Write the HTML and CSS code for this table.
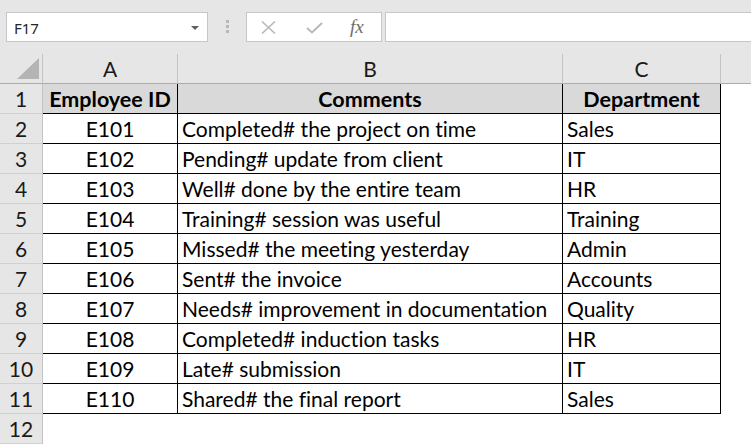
FILE: index.html
```html
<!DOCTYPE html>
<html>
<head>
<meta charset="utf-8">
<link rel="stylesheet" href="styles.css">
</head>
<body>
<div class="app">
  <div class="formula-bar">
    <div class="namebox">
      <span class="nb-text">F17</span>
      <svg class="nb-arrow" width="8" height="4" viewBox="0 0 8 4"><path d="M0 0H8L4 4Z" fill="#5f5f5f"/></svg>
    </div>
    <div class="grip"><i></i><i></i><i></i></div>
    <div class="fbuttons">
      <svg class="ic-x" width="15" height="13" viewBox="0 0 15 13"><path d="M1 0.5L14 12.5M14 0.5L1 12.5" stroke="#b9b9b9" stroke-width="1.6" fill="none"/></svg>
      <svg class="ic-check" width="17" height="12" viewBox="0 0 17 12"><path d="M1 6L6 10.5L16 1" stroke="#b9b9b9" stroke-width="2" fill="none"/></svg>
      <span class="fx">fx</span>
    </div>
    <div class="finput"></div>
  </div>
  <div class="sheet">
    <div class="corner"><span class="tri"></span></div>
    <div class="ch">A</div><div class="ch">B</div><div class="ch">C</div><div class="ch ch-end"></div>

    <div class="rh">1</div><div class="c th">Employee ID</div><div class="c th">Comments</div><div class="c th">Department</div><div class="e"></div>
    <div class="rh">2</div><div class="c ctr">E101</div><div class="c">Completed# the project on time</div><div class="c">Sales</div><div class="e"></div>
    <div class="rh">3</div><div class="c ctr">E102</div><div class="c">Pending# update from client</div><div class="c">IT</div><div class="e"></div>
    <div class="rh">4</div><div class="c ctr">E103</div><div class="c">Well# done by the entire team</div><div class="c">HR</div><div class="e"></div>
    <div class="rh">5</div><div class="c ctr">E104</div><div class="c">Training# session was useful</div><div class="c">Training</div><div class="e"></div>
    <div class="rh">6</div><div class="c ctr">E105</div><div class="c">Missed# the meeting yesterday</div><div class="c">Admin</div><div class="e"></div>
    <div class="rh">7</div><div class="c ctr">E106</div><div class="c">Sent# the invoice</div><div class="c">Accounts</div><div class="e"></div>
    <div class="rh">8</div><div class="c ctr">E107</div><div class="c">Needs# improvement in documentation</div><div class="c">Quality</div><div class="e"></div>
    <div class="rh">9</div><div class="c ctr">E108</div><div class="c">Completed# induction tasks</div><div class="c">HR</div><div class="e"></div>
    <div class="rh">10</div><div class="c ctr">E109</div><div class="c">Late# submission</div><div class="c">IT</div><div class="e"></div>
    <div class="rh">11</div><div class="c ctr">E110</div><div class="c">Shared# the final report</div><div class="c">Sales</div><div class="e"></div>
    <div class="rh">12</div><div class="e"></div><div class="e"></div><div class="e"></div><div class="e"></div>
  </div>
</div>
</body>
</html>
```

FILE: styles.css
```css
* { box-sizing: border-box; }
html, body { margin: 0; padding: 0; }
body {
  width: 751px;
  height: 444px;
  overflow: hidden;
  background: #ffffff;
  font-family: Lato, "Open Sans", sans-serif;
  font-variant-ligatures: none;
  font-feature-settings: "liga" 0, "clig" 0;
  color: #000;
}
.app { width: 751px; height: 444px; overflow: hidden; }

.formula-bar {
  height: 54px;
  background: #e6e6e6;
  display: flex;
  align-items: flex-start;
  padding: 12px 0 0 6px;
}
.namebox {
  width: 202px;
  height: 30px;
  background: #fff;
  border: 1px solid #c6c6c6;
  display: flex;
  align-items: center;
  justify-content: space-between;
  padding: 0 8px 0 7px;
}
.nb-text {
  font-family: "Noto Sans", sans-serif;
  font-size: 15px;
  color: #262626;
  padding-top: 1px;
}
.nb-arrow { margin-top: 1px; }
.grip {
  width: 38px;
  height: 30px;
  display: flex;
  flex-direction: column;
  align-items: center;
  justify-content: flex-start;
  gap: 2px;
  padding-top: 8px;
}
.grip i {
  display: block;
  width: 3px;
  height: 3px;
  background: #b8b8b8;
}
.fbuttons {
  width: 136px;
  height: 30px;
  background: #fff;
  border: 1px solid #c6c6c6;
  display: flex;
  align-items: center;
  padding-left: 14px;
}
.ic-check { margin-left: 30px; margin-top: 2px; }
.fx {
  margin-left: 27px;
  font-family: "Liberation Serif", serif;
  font-style: italic;
  font-size: 19px;
  color: #6e6e6e;
}
.finput {
  flex: 1;
  height: 30px;
  margin-left: 3px;
  background: #fff;
  border: 1px solid #c6c6c6;
  border-right: none;
}

.sheet {
  display: grid;
  grid-template-columns: 43px 135px 385px 158px 1fr;
  grid-auto-rows: 30px;
  font-size: 21px;
}
.corner {
  background: #e6e6e6;
  border-right: 1px solid #c3c3c3;
  border-bottom: 1px solid #ababab;
  position: relative;
}
.tri {
  position: absolute;
  right: 3px;
  bottom: 4px;
  width: 0;
  height: 0;
  border-left: 22px solid transparent;
  border-bottom: 21px solid #b4b4b4;
}
.ch {
  background: #e6e6e6;
  border-right: 1px solid #c3c3c3;
  border-bottom: 1px solid #ababab;
  text-align: center;
  line-height: 28px;
  padding-top: 1px;
  color: #1a1a1a;
}
.ch-end { border-right: none; }
.rh {
  background: #e6e6e6;
  border-right: 1px solid #c3c3c3;
  border-bottom: 1px solid #d0d0d0;
  text-align: center;
  line-height: 28px;
  padding-top: 1px;
  color: #1a1a1a;
}
.c {
  border-right: 1px solid #000;
  border-bottom: 1px solid #000;
  line-height: 28px;
  padding: 1px 0 0 4px;
  white-space: nowrap;
  overflow: hidden;
}
.c.ctr { text-align: center; padding-left: 0; }
.c.th {
  background: #d9d9d9;
  font-weight: bold;
  font-size: 21.5px;
  text-align: center;
  padding-left: 0;
}
.e { background: #fff; }
```
